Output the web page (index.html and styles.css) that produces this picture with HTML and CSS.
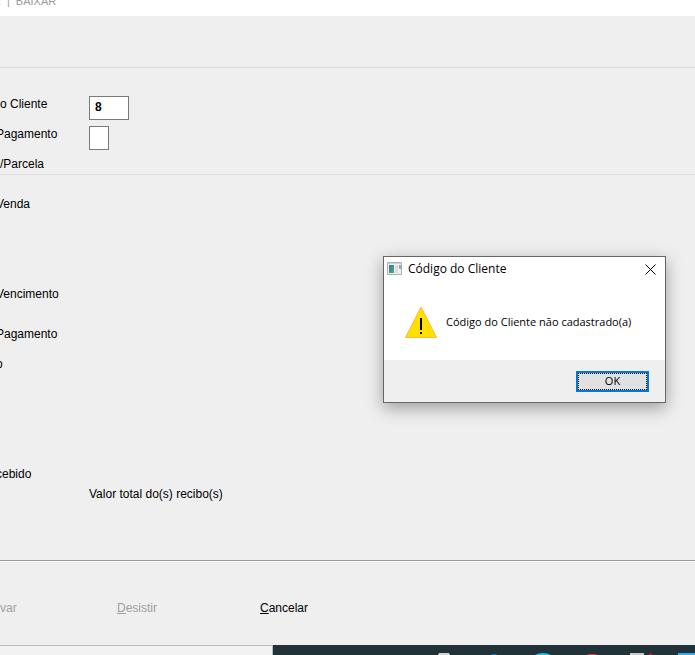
FILE: index.html
```html
<!DOCTYPE html>
<html lang="pt-BR">
<head>
    <meta charset="UTF-8">
    <meta name="viewport" content="width=device-width, initial-scale=1.0">
    <title>Baixar</title>
    <link rel="stylesheet" href="styles.css">
</head>
<body>
    <nav class="menu">
        <span class="menu-cut">R</span><span class="menu-sep">|</span><span>BAIXAR</span>
    </nav>
    <div class="toolbar"></div>

    <form class="form">
        <section class="keys">
            <div class="row">
                <label for="cliente">o Cliente</label>
                <input type="text" id="cliente" class="code" value="8">
            </div>
            <div class="row">
                <label for="pagamento" class="cut">Pagamento</label>
                <input type="text" id="pagamento" class="flag">
            </div>
            <div class="row">
                <span>/Parcela</span>
            </div>
        </section>

        <section class="details">
            <span class="cut">Venda</span>
            <span class="cut">Vencimento</span>
            <span class="cut">Pagamento</span>
            <span class="cut">o</span>
            <span class="cut">cebido</span>
            <span class="total">Valor total do(s) recibo(s)</span>
        </section>

        <footer class="actions">
            <button type="button" disabled>var</button>
            <button type="button" disabled><u>D</u>esistir</button>
            <button type="button"><u>C</u>ancelar</button>
        </footer>
    </form>

    <div class="bottom">
        <div class="status"></div>
        <div class="taskbar">
            <svg width="422" height="10" viewBox="0 0 422 10">
                <path d="M166 8h10l1 2h-12z" fill="#d4d4d4"/>
                <path d="M219 9h4l1 1h-6z" fill="#0b6fc2"/>
                <path d="M262 10q3-2 8-2t8 2z" fill="#25c0cf"/>
                <path d="M313 10q2-1 6-1t6 1z" fill="#db4437"/>
                <path d="M357 8h14v2h-14z" fill="#c9c9c9"/>
                <path d="M377 8h1v1h1v1h-3v-1h1z" fill="#b3263a"/>
                <path d="M405 8h17v2h-17z" fill="#35aef0"/>
            </svg>
        </div>
    </div>

    <div class="dialog" role="alertdialog" aria-labelledby="dialog-title">
        <div class="dialog-title">
            <svg width="16" height="14" viewBox="0 0 16 14">
                <defs>
                    <linearGradient id="app" x1="0" y1="0" x2="1" y2="1">
                        <stop offset="0" stop-color="#3c6fa0"/>
                        <stop offset="1" stop-color="#4fae7c"/>
                    </linearGradient>
                </defs>
                <path d="M.5.5h14v12H.5z" fill="#eef0f2" stroke="#aab0b6"/>
                <path d="M1 1h13v1H1z" fill="#c9d2da"/>
                <path d="M2 3h5v8H2z" fill="url(#app)"/>
                <path d="M8 3h3v8H8z" fill="#dcdcdc"/>
                <path d="M12 3h2v4h-2z" fill="#7fb8a5"/>
            </svg>
            <span id="dialog-title">Código do Cliente</span>
            <button type="button" class="close" aria-label="Fechar">
                <svg width="11" height="11" viewBox="0 0 11 11">
                    <path d="M.5.5l10 10M10.5.5l-10 10" stroke="#000"/>
                </svg>
            </button>
        </div>
        <div class="dialog-body">
            <svg width="32" height="32" viewBox="0 0 32 32">
                <path d="M16 1L31.5 31.5H.5z" fill="#ffe000" stroke="#ffb92e"/>
                <path d="M15 12h2v12h-2zM15 26h2v2h-2z" fill="#000"/>
            </svg>
            <span>Código do Cliente não cadastrado(a)</span>
        </div>
        <div class="dialog-footer">
            <button type="button" class="ok">OK</button>
        </div>
    </div>
</body>
</html>
```

FILE: styles.css
```css
* {
    box-sizing: border-box;
}
body {
    margin: 0;
    min-height: 100vh;
    display: flex;
    flex-direction: column;
    overflow: hidden;
    position: relative;
    background-color: #efefef;
    color: #000;
    font-family: "Liberation Sans", Arial, sans-serif;
    font-size: 12px;
    line-height: 16px;
}
.menu {
    display: flex;
    align-items: flex-end;
    height: 16px;
    padding-bottom: 7px;
    background-color: #fff;
    color: #9a9a9a;
    font-size: 11px;
}
.menu-cut {
    margin-left: -7px;
    color: #8fb8d8;
}
.menu-sep {
    margin: 0 6px;
    color: #b28fb8;
}
.toolbar {
    height: 52px;
    border-bottom: 1px solid #dcdcdc;
}
.form {
    flex: 1;
    display: flex;
    flex-direction: column;
}
.keys {
    padding-top: 28px;
    height: 107px;
    border-bottom: 1px solid #dcdcdc;
}
.row {
    display: grid;
    grid-template-columns: 89px auto;
    justify-content: start;
    align-items: start;
    height: 30px;
}
.cut {
    margin-left: -4px;
}
.row input {
    height: 24px;
    padding: 0 5px 2px;
    border: 1px solid #7a7a7a;
    background-color: #fff;
    font: bold 12px "Liberation Sans", Arial, sans-serif;
}
.row .code {
    width: 40px;
}
.row .flag {
    width: 20px;
}
.details {
    flex: 1;
    display: grid;
    grid-template-rows: 90px 40px 30px 110px 20px 20px;
    padding-top: 21px;
    border-bottom: 1px solid #999;
}
.total {
    padding-left: 89px;
}
.actions {
    display: grid;
    grid-template-columns: 117px 143px auto;
    justify-content: start;
    align-items: center;
    height: 84px;
    padding-top: 9px;
    border-top: 1px solid #fff;
}
.actions button {
    padding: 0;
    border: none;
    background: none;
    color: #000;
    font: inherit;
    text-align: left;
}
.actions button:disabled {
    color: #a0a0a0;
}
.bottom {
    display: flex;
    height: 10px;
}
.status {
    width: 273px;
    border-top: 1px solid #bcbcbc;
    border-right: 1px solid #bcbcbc;
    background-color: #f2f2f2;
}
.taskbar {
    flex: 1;
    overflow: hidden;
    background-color: #213238;
}
.taskbar svg {
    display: block;
}
.dialog {
    position: absolute;
    left: 383px;
    top: 256px;
    width: 283px;
    border: 1px solid #666;
    background-color: #fff;
    box-shadow: 0 5px 16px rgba(0, 0, 0, 0.35);
    font-family: "Open Sans", "Segoe UI", sans-serif;
}
.dialog svg {
    flex-shrink: 0;
}
.dialog-title {
    display: flex;
    align-items: center;
    height: 24px;
    padding: 0 9px 0 3px;
    gap: 5px;
}
.close {
    display: flex;
    margin-left: auto;
    padding: 0;
    border: none;
    background: none;
}
.dialog-body {
    display: flex;
    align-items: center;
    gap: 9px;
    height: 79px;
    padding: 2px 21px 0;
    font-size: 11px;
    white-space: nowrap;
}
.dialog-footer {
    display: flex;
    justify-content: flex-end;
    align-items: center;
    height: 42px;
    padding-right: 16px;
    background-color: #efefef;
}
.ok {
    width: 73px;
    height: 21px;
    padding: 0;
    border: 2px solid #0078d7;
    outline: 1px dotted #000;
    outline-offset: -3px;
    background-color: #e1e1e1;
    color: #000;
    font: 11px/14px "Open Sans", "Segoe UI", sans-serif;
}
```
